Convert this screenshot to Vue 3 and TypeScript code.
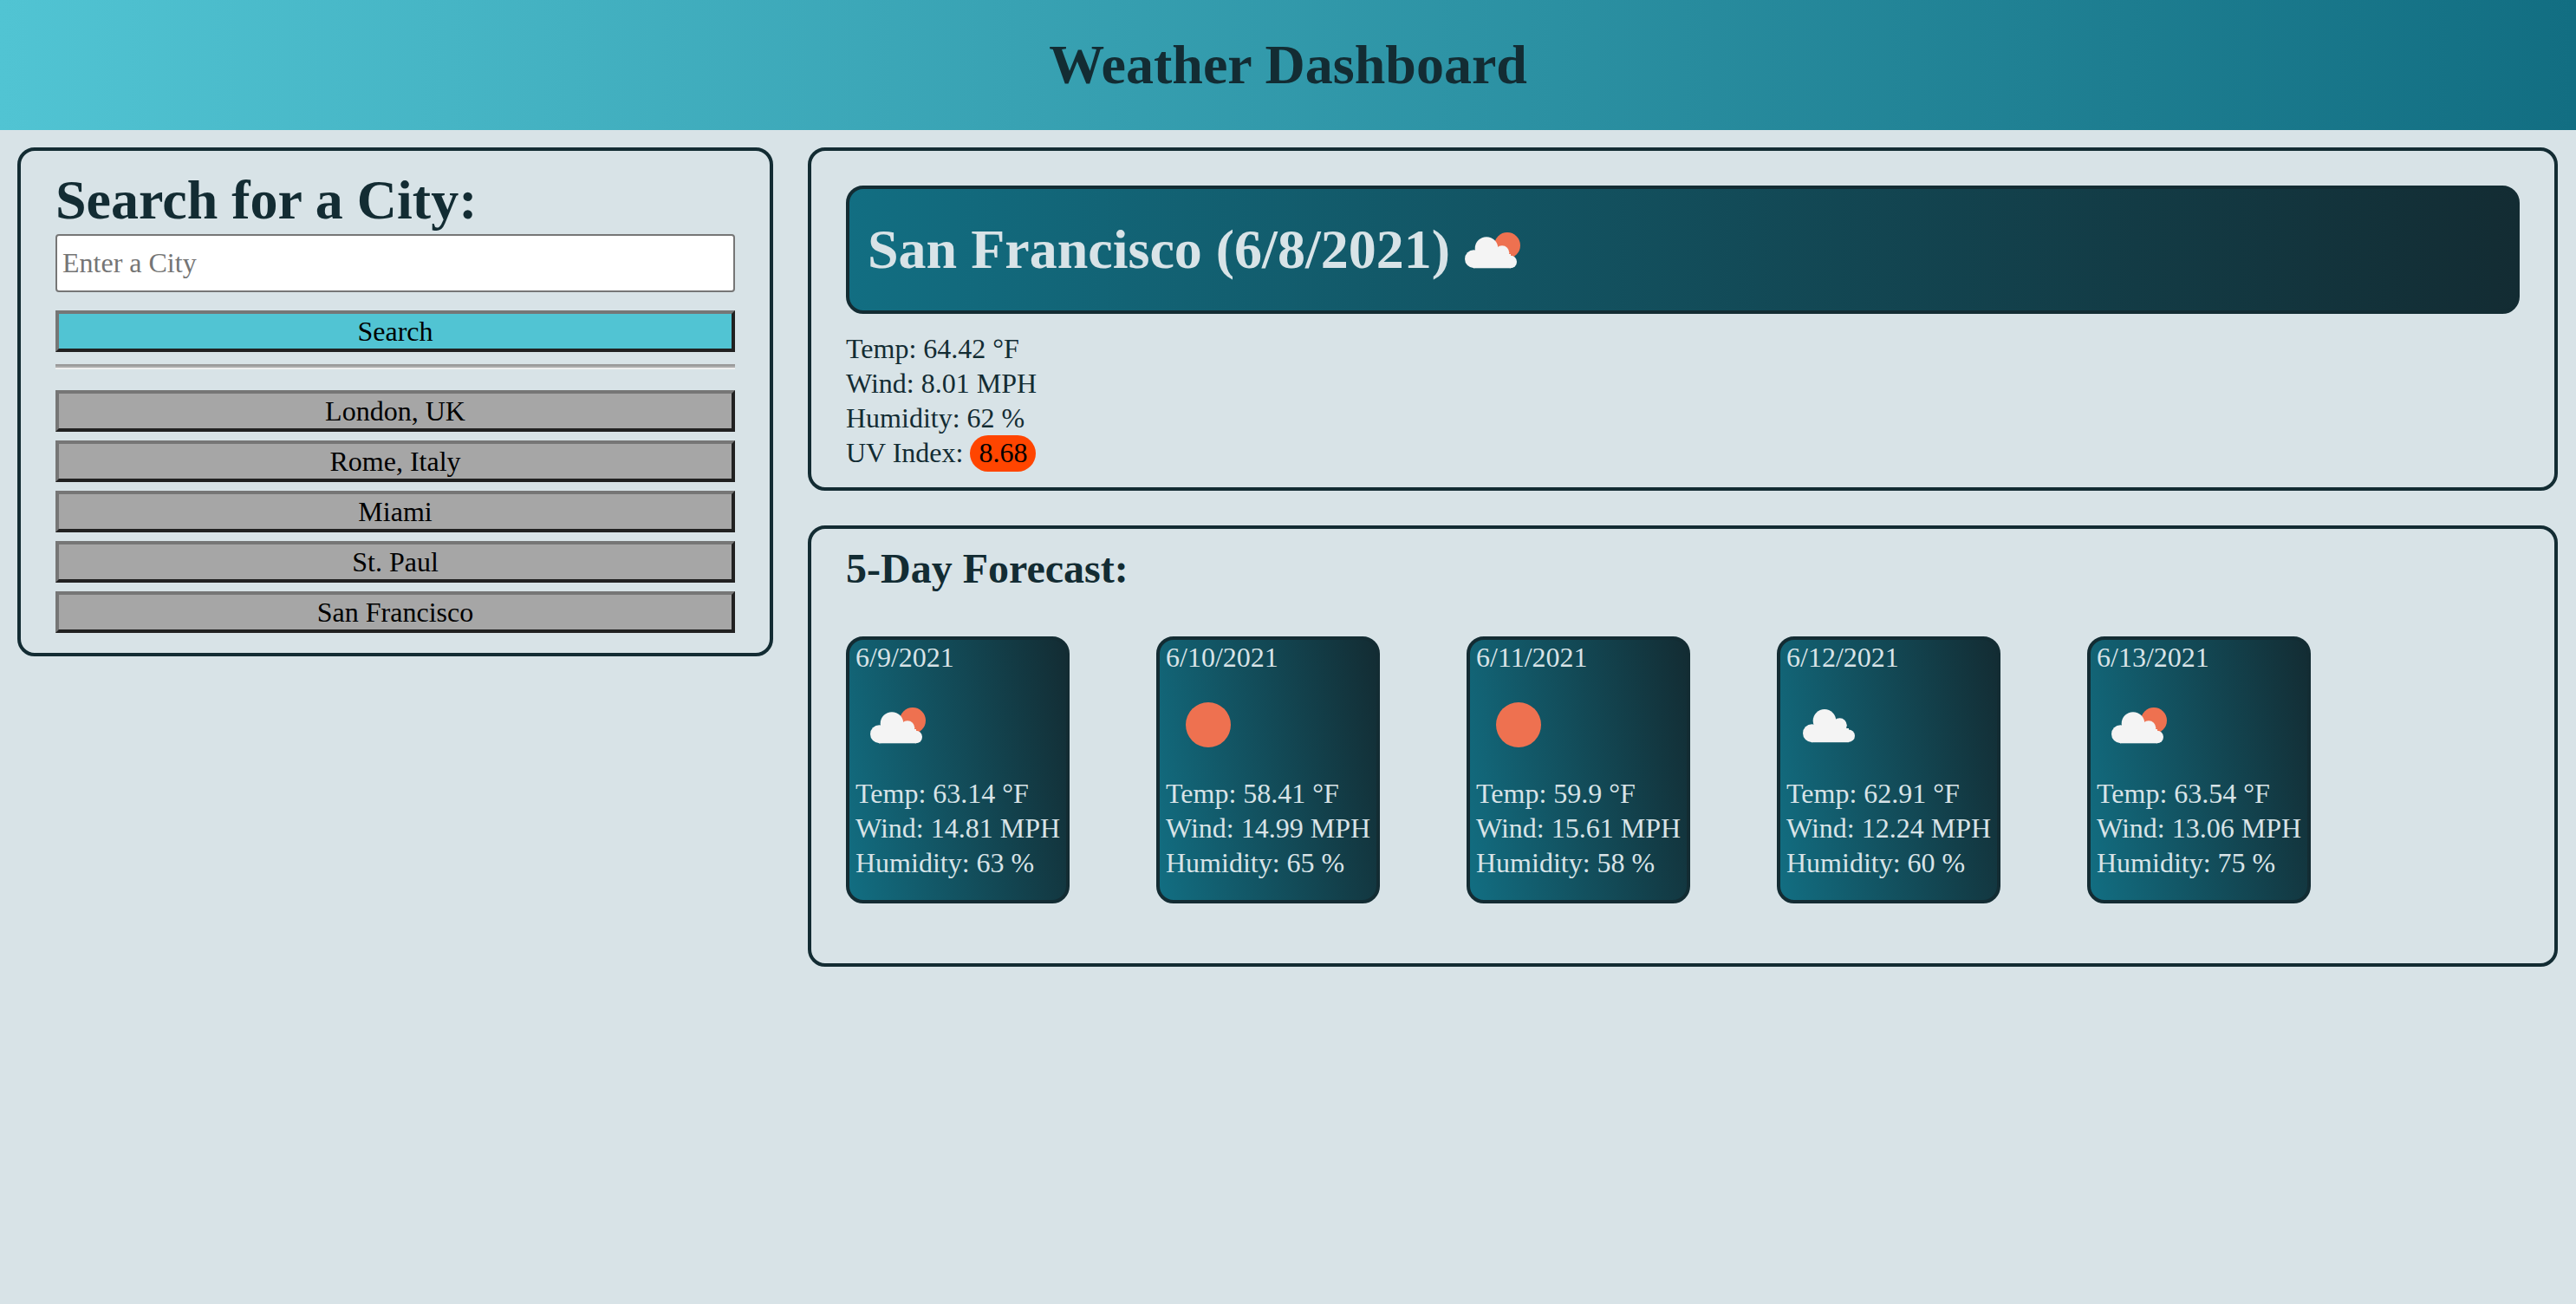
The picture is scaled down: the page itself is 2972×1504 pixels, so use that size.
<script setup lang="ts">
type Sky = 'partly' | 'clear' | 'cloud'

interface Day {
  date: string
  sky: Sky
  temp: string
  wind: string
  humidity: string
}

const cities: string[] = ['London, UK', 'Rome, Italy', 'Miami', 'St. Paul', 'San Francisco']

const days: Day[] = [
  { date: '6/9/2021', sky: 'partly', temp: '63.14', wind: '14.81', humidity: '63' },
  { date: '6/10/2021', sky: 'clear', temp: '58.41', wind: '14.99', humidity: '65' },
  { date: '6/11/2021', sky: 'clear', temp: '59.9', wind: '15.61', humidity: '58' },
  { date: '6/12/2021', sky: 'cloud', temp: '62.91', wind: '12.24', humidity: '60' },
  { date: '6/13/2021', sky: 'partly', temp: '63.54', wind: '13.06', humidity: '75' },
]
</script>

<template>
  <div class="page">
    <header class="top">
      <h1>Weather Dashboard</h1>
    </header>
    <main class="layout">
      <aside class="panel search">
        <h2>Search for a City:</h2>
        <input class="city-input" type="text" placeholder="Enter a City" />
        <button class="btn btn-search" type="button">Search</button>
        <hr class="rule" />
        <div class="history">
          <button v-for="city in cities" :key="city" class="btn btn-city" type="button">{{ city }}</button>
        </div>
      </aside>
      <section class="results">
        <div class="panel current">
          <div class="title-box">
            <h2>San Francisco (6/8/2021)</h2>
            <svg class="icon" viewBox="0 0 100 100" aria-hidden="true">
              <circle cx="66" cy="45" r="15" fill="#ee7150" />
              <g fill="#f4f4f4">
                <circle cx="42" cy="48.5" r="13.3" />
                <circle cx="60" cy="53.5" r="8.3" />
                <circle cx="27.5" cy="60.7" r="10.5" />
                <circle cx="69.7" cy="64" r="7.3" />
                <rect x="27" y="55" width="43" height="16.3" />
              </g>
            </svg>
          </div>
          <div class="stats">
            <div>Temp: 64.42 °F</div>
            <div>Wind: 8.01 MPH</div>
            <div>Humidity: 62 %</div>
            <div>UV Index: <span class="uv">8.68</span></div>
          </div>
        </div>
        <div class="panel forecast">
          <h3>5-Day Forecast:</h3>
          <div class="cards">
            <article v-for="day in days" :key="day.date" class="card">
              <div>{{ day.date }}</div>
              <svg class="icon card-icon" viewBox="0 0 100 100" aria-hidden="true">
                <circle v-if="day.sky === 'clear'" cx="49" cy="50" r="26" fill="#ee7150" />
                <template v-else-if="day.sky === 'partly'">
                  <circle cx="66" cy="45" r="15" fill="#ee7150" />
                  <g fill="#f4f4f4">
                    <circle cx="42" cy="48.5" r="13.3" />
                    <circle cx="60" cy="53.5" r="8.3" />
                    <circle cx="27.5" cy="60.7" r="10.5" />
                    <circle cx="69.7" cy="64" r="7.3" />
                    <rect x="27" y="55" width="43" height="16.3" />
                  </g>
                </template>
                <g v-else fill="#f4f4f4">
                  <circle cx="44" cy="45.3" r="13.3" />
                  <circle cx="61.5" cy="50.5" r="8.3" />
                  <circle cx="29.5" cy="59.7" r="10.5" />
                  <circle cx="71.7" cy="62.7" r="7.3" />
                  <rect x="29" y="54" width="43" height="16.2" />
                </g>
              </svg>
              <div>Temp: {{ day.temp }} °F</div>
              <div>Wind: {{ day.wind }} MPH</div>
              <div>Humidity: {{ day.humidity }} %</div>
            </article>
          </div>
        </div>
      </section>
    </main>
  </div>
</template>

<style>
html,
body {
  margin: 0;
  background: #d8e3e7;
}
</style>

<style scoped>
.page {
  min-height: 1504px;
  background: #d8e3e7;
  color: #132c33;
  font-family: "Liberation Serif", "Times New Roman", serif;
  font-size: 32px;
  line-height: 40px;
}

.top {
  height: 150px;
  display: flex;
  align-items: center;
  justify-content: center;
  background: linear-gradient(to right, #51c4d3, #126e82);
}

.top h1 {
  margin: 0;
  font-size: 64px;
  line-height: 74px;
  font-weight: 700;
}

.layout {
  display: grid;
  grid-template-columns: 872px 1fr;
  column-gap: 40px;
  align-items: start;
  padding: 20px 21px 0 20px;
}

.panel {
  box-sizing: border-box;
  border: 4px solid #132c33;
  border-radius: 20px;
}

.search {
  display: flex;
  flex-direction: column;
  padding: 20px 40px 23px;
}

.search h2 {
  margin: 0 0 2px;
  font-size: 64px;
  line-height: 74px;
  font-weight: 700;
}

.city-input {
  box-sizing: border-box;
  height: 67px;
  width: 100%;
  padding: 0 6px;
  border: 2px solid #767676;
  border-radius: 4px;
  background: #fff;
  font: inherit;
  color: #132c33;
}

.city-input::placeholder {
  color: #757575;
  opacity: 1;
}

.btn {
  box-sizing: border-box;
  display: block;
  width: 100%;
  height: 48px;
  padding: 0 0 2px;
  border: 4px solid;
  border-color: #767676 #212121 #212121 #767676;
  color: #000;
  font: inherit;
}

.btn-search {
  margin-top: 21px;
  background: #51c4d3;
}

.btn-city {
  background: #a6a6a6;
}

.rule {
  box-sizing: border-box;
  width: 100%;
  height: 6px;
  margin: 14px 0 24px;
  border: 0;
  border-top: 2px solid #999999;
  border-bottom: 2px solid #eeeeee;
  background: #ababab;
}

.history {
  display: flex;
  flex-direction: column;
  gap: 10px;
}

.results {
  display: flex;
  flex-direction: column;
  gap: 40px;
  min-width: 0;
}

.current {
  padding: 40px 40px 20px;
}

.title-box {
  box-sizing: border-box;
  height: 148px;
  display: flex;
  align-items: center;
  padding: 0 21px;
  border: 4px solid #132c33;
  border-radius: 20px;
  background: linear-gradient(to right, #126e82, #132c33);
  color: #d8e3e7;
}

.title-box h2 {
  margin: 0;
  font-size: 64px;
  line-height: 74px;
  font-weight: 700;
  white-space: nowrap;
}

.icon {
  flex: none;
  display: block;
  width: 100px;
  height: 100px;
  filter: blur(0.6px);
}

.stats {
  margin-top: 20px;
}

.uv {
  padding: 2px 10px 4px;
  border-radius: 21px;
  background: #ff4500;
  color: #000;
}

.forecast {
  padding: 18px 40px 69px;
}

.forecast h3 {
  margin: 0 0 51px;
  font-size: 48px;
  line-height: 55px;
  font-weight: 700;
}

.cards {
  display: flex;
  gap: 100px;
}

.card {
  box-sizing: border-box;
  flex: none;
  width: 258px;
  height: 308px;
  padding: 0 7px 22px;
  border: 4px solid #132c33;
  border-radius: 20px;
  background: linear-gradient(80deg, #126e82, #132c33);
  color: #d8e3e7;
  white-space: nowrap;
}

.card-icon {
  margin: 8px 0 9px;
}
</style>
